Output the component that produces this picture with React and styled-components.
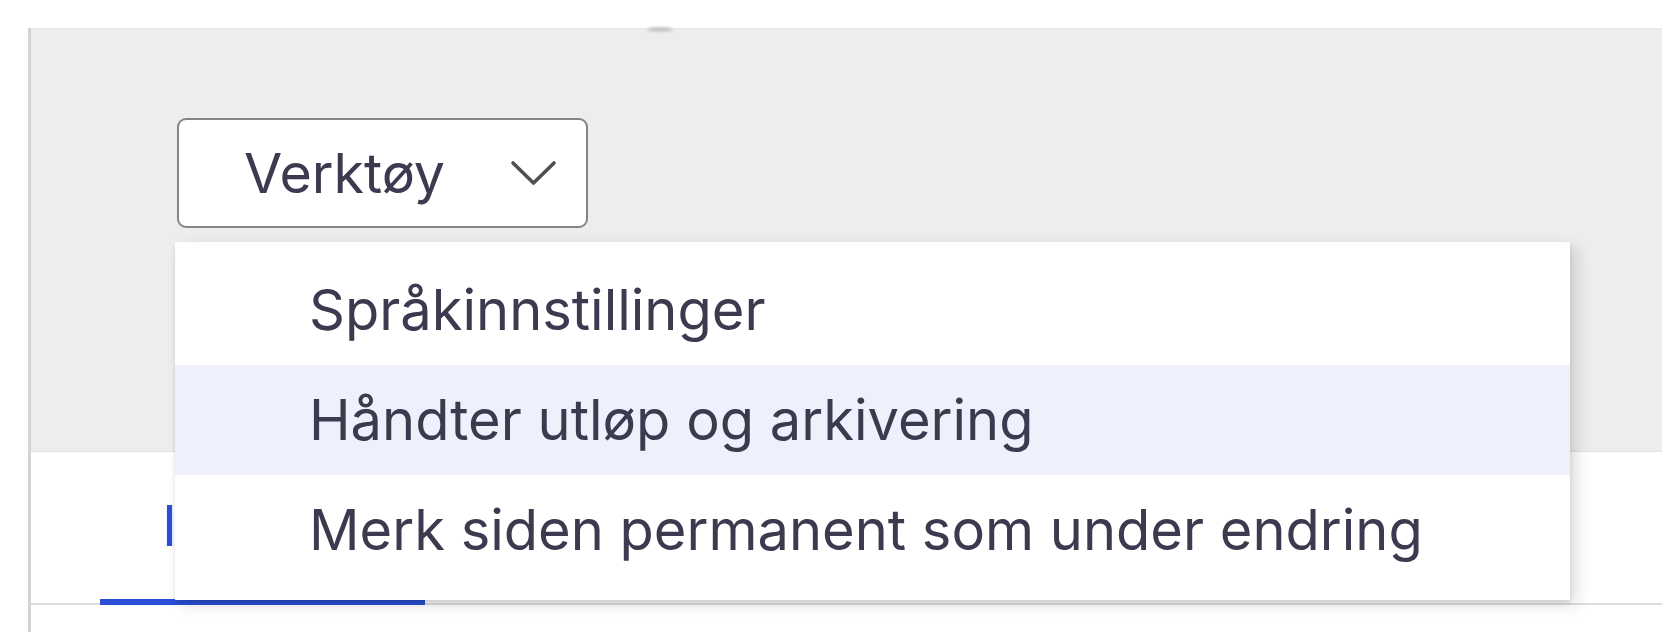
import React from "react";
import styled, { createGlobalStyle } from "styled-components";

const GlobalStyle = createGlobalStyle`
  html, body {
    margin: 0;
    padding: 0;
    background: #ffffff;
  }
  body {
    font-family: Inter, "Noto Sans", "Liberation Sans", sans-serif;
    -webkit-font-smoothing: antialiased;
  }
  * { box-sizing: border-box; }
`;

const Page = styled.div`
  height: 632px;
  padding: 28px 0 0 28px;
  overflow: hidden;
`;

const Frame = styled.div`
  width: 1634px;
  height: 100%;
  border-left: 3px solid #d3d3d3;
  display: flex;
  flex-direction: column;
`;

const Header = styled.header`
  position: relative;
  height: 424px;
  background: #ededed;
  border-top: 1px solid #e6e6e6;
  border-bottom: 1px solid #e2e2e2;
  padding: 89px 0 0 146px;
`;

const Smudge = styled.span`
  position: absolute;
  top: -2px;
  left: 616px;
  width: 26px;
  height: 5px;
  border-radius: 50%;
  background: #c4c4c4;
  filter: blur(1.5px);
`;

const ToolsWrap = styled.div`
  position: relative;
  display: inline-block;
  z-index: 2;
`;

const ToolsButton = styled.button`
  width: 411px;
  height: 110px;
  display: flex;
  align-items: center;
  padding: 0 29px 0 65px;
  background: #ffffff;
  border: 2.5px solid #858585;
  border-radius: 9px;
  font-family: inherit;
  font-size: 55.5px;
  color: #3b3a4f;
  cursor: pointer;
`;

const ButtonLabel = styled.span`
  line-height: 1;
`;

const Chevron = styled.svg`
  margin-left: auto;
  display: block;
`;

const Menu = styled.ul`
  position: absolute;
  top: 124px;
  left: -2px;
  width: 1395px;
  margin: 0;
  padding: 13px 0 15px;
  list-style: none;
  background: #ffffff;
  box-shadow: 7px 5px 14px rgba(0, 0, 0, 0.13), 0 3px 4px rgba(0, 0, 0, 0.1);
`;

const MenuItem = styled.li`
  height: 110px;
  display: flex;
  align-items: center;
  padding-left: 134px;
  font-size: 56px;
  color: #3b3a4f;
  background: ${(p) => (p.$active ? "#eef0fb" : "transparent")};
  white-space: nowrap;
`;

const TabBar = styled.nav`
  display: flex;
  height: 153px;
  padding-left: 69px;
  border-bottom: 2px solid #dedede;
`;

const Tab = styled.div`
  width: 325px;
  padding: 41px 0 0 62px;
  border-bottom: 6px solid #2b4fd6;
  margin-bottom: -2px;
  font-size: 56px;
  line-height: 66px;
  color: #2b4fd6;
  white-space: nowrap;
  overflow: hidden;
`;

const items = [
  { label: "Språkinnstillinger" },
  { label: "Håndter utløp og arkivering", active: true },
  { label: "Merk siden permanent som under endring" },
];

export default function App() {
  return (
    <>
      <GlobalStyle />
      <Page>
        <Frame>
          <Header>
            <Smudge />
            <ToolsWrap>
              <ToolsButton type="button">
                <ButtonLabel>Verktøy</ButtonLabel>
                <Chevron width="47" height="26" viewBox="0 0 47 26" fill="none">
                  <polyline
                    points="3,3 23.5,23 44,3"
                    stroke="#4f4f4f"
                    strokeWidth="3.6"
                    strokeLinecap="round"
                    strokeLinejoin="round"
                  />
                </Chevron>
              </ToolsButton>
              <Menu>
                {items.map((it) => (
                  <MenuItem key={it.label} $active={it.active}>
                    {it.label}
                  </MenuItem>
                ))}
              </Menu>
            </ToolsWrap>
          </Header>
          <TabBar>
            <Tab>Innhold</Tab>
          </TabBar>
        </Frame>
      </Page>
    </>
  );
}
